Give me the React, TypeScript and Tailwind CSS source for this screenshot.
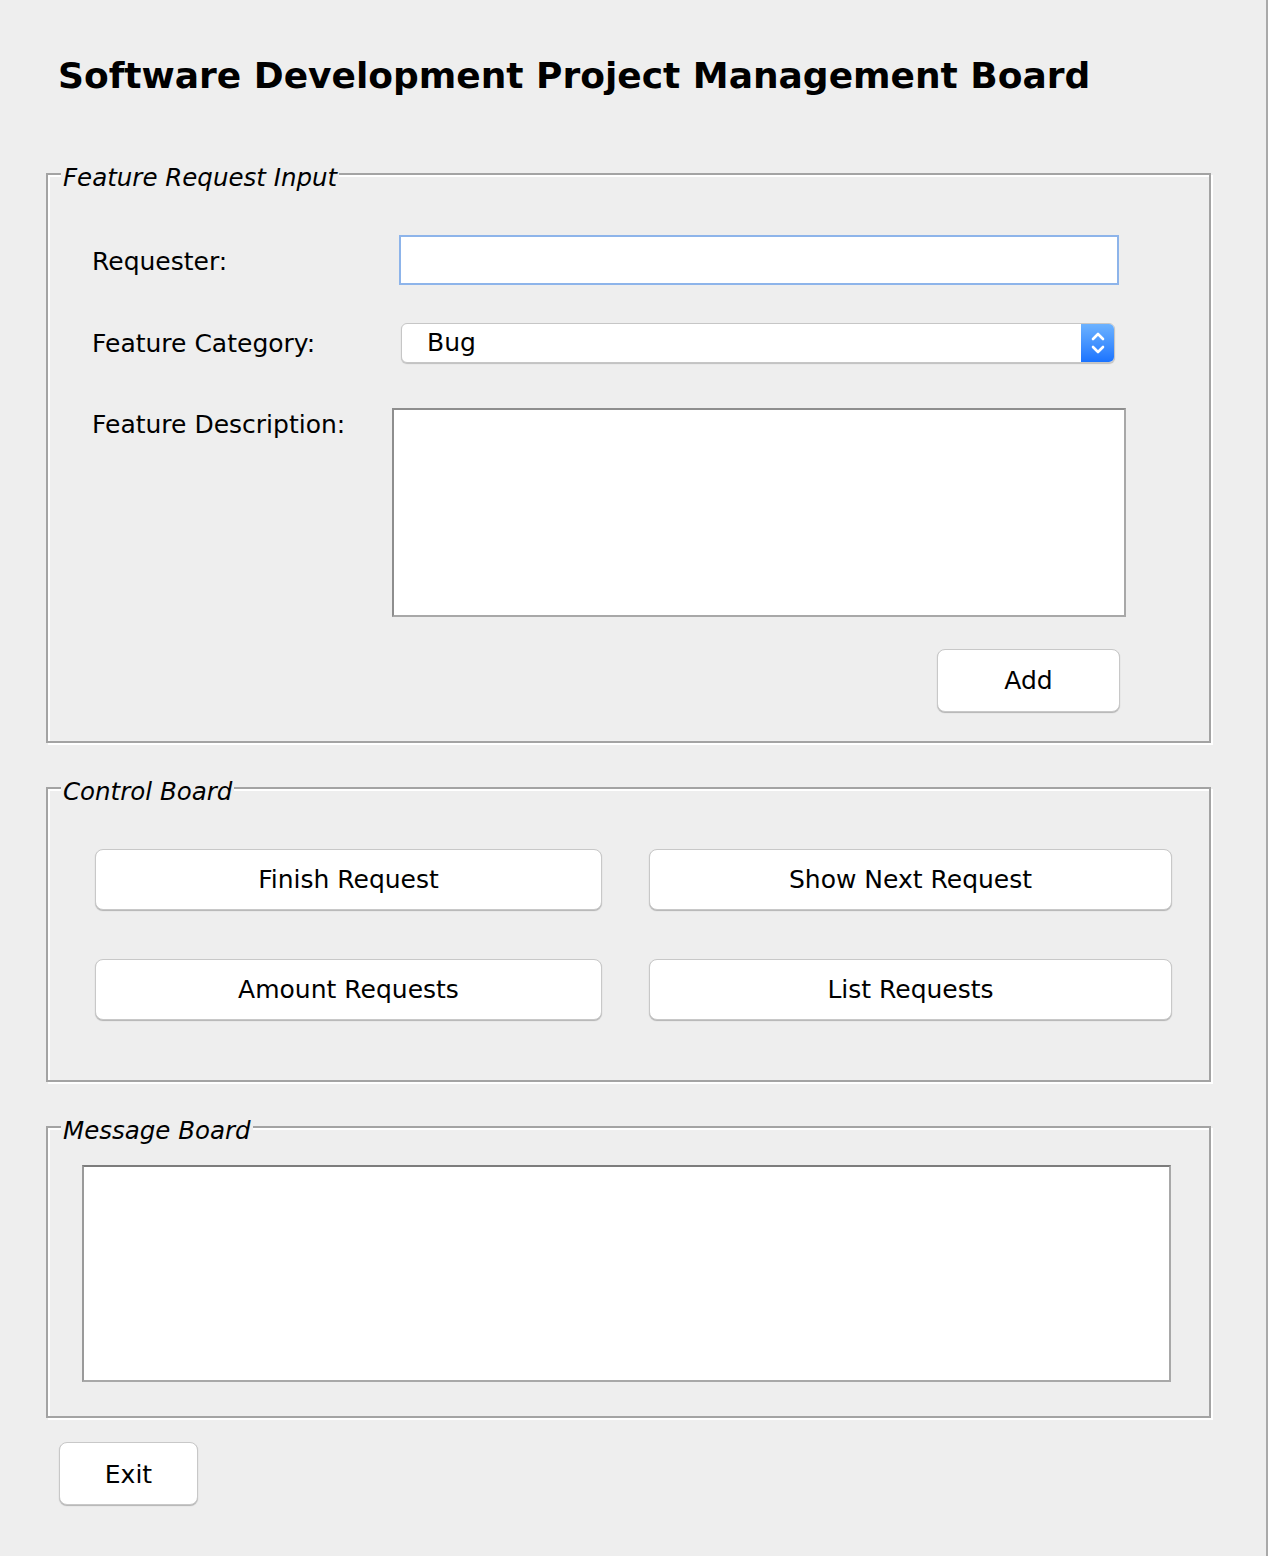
import React from 'react'

const font = { fontFamily: '"DejaVu Sans", "Liberation Sans", sans-serif' }

function Panel({ title, className, children }: { title: string; className?: string; children: React.ReactNode }) {
  return (
    <div
      className={`relative w-[1165px] border-2 border-[#a3a3a3] shadow-[2px_2px_0_#fff,inset_2px_2px_0_#fff] ${className ?? ''}`}
    >
      <span className="absolute left-[13px] top-[-12px] bg-[#eeeeee] pl-[2px] pr-[2px] text-[24.5px] italic leading-[30px] text-black">
        {title}
      </span>
      {children}
    </div>
  )
}

function MacButton({ label, className }: { label: string; className?: string }) {
  return (
    <button
      className={`flex items-center justify-center rounded-[8px] border border-[#c8c8c8] bg-white text-[25px] text-black shadow-[0_1px_1px_rgba(0,0,0,0.25)] ${className ?? ''}`}
    >
      {label}
    </button>
  )
}

export default function App() {
  return (
    <div className="h-[1556px] w-[1268px] border-r-2 border-[#a9a9a9] bg-[#eeeeee] pl-[46px]" style={font}>
      {/* Title */}
      <h1 className="pl-[12px] pt-[51px] text-[36px] font-bold leading-[50px] text-black">
        Software Development Project Management Board
      </h1>

      {/* Feature Request Input */}
      <Panel title="Feature Request Input" className="mt-[72px] h-[570px]">
        <div className="mt-[60px] flex h-[50px] items-center">
          <label className="w-[351px] pl-[44px] pt-[3px] text-[25px] text-black">Requester:</label>
          <input className="h-[50px] w-[720px] border-2 border-[#8db4ea] bg-white outline-none" />
        </div>

        <div className="mt-[38px] flex h-[40px] items-center">
          <label className="w-[353px] pl-[44px] pt-[1px] text-[25px] text-black">Feature Category:</label>
          <div className="flex h-[40px] w-[714px] items-stretch overflow-hidden rounded-[6px] border border-[#c6c6c6] bg-white shadow-[0_1px_1px_rgba(0,0,0,0.2)]">
            <span className="flex-1 pl-[25px] text-[25px] leading-[38px] text-black">Bug</span>
            <span className="flex w-[33px] items-center justify-center bg-gradient-to-b from-[#6cb2ff] to-[#1a73ff]">
              <svg width="16" height="28" viewBox="0 0 16 28" fill="none" stroke="#fff" strokeWidth="2.6" strokeLinecap="round" strokeLinejoin="round">
                <path d="M3 10 L8 5 L13 10" />
                <path d="M3 18 L8 23 L13 18" />
              </svg>
            </span>
          </div>
        </div>

        <div className="mt-[45px] flex">
          <label className="w-[344px] pl-[44px] pt-[2px] text-[25px] leading-[30px] text-black">Feature Description:</label>
          <textarea className="h-[209px] w-[734px] resize-none border-2 border-[#8e8e8e] border-r-[#a8a8a8] border-b-[#a8a8a8] bg-white outline-none" />
        </div>

        <div className="mt-[32px] flex">
          <MacButton label="Add" className="ml-[889px] h-[63px] w-[183px]" />
        </div>
      </Panel>

      {/* Control Board */}
      <Panel title="Control Board" className="mt-[44px] h-[295px]">
        <div className="grid grid-cols-[507px_523px] gap-x-[47px] gap-y-[49px] pl-[47px] pt-[60px]">
          <MacButton label="Finish Request" className="h-[61px]" />
          <MacButton label="Show Next Request" className="h-[61px]" />
          <MacButton label="Amount Requests" className="h-[61px]" />
          <MacButton label="List Requests" className="h-[61px]" />
        </div>
      </Panel>

      {/* Message Board */}
      <Panel title="Message Board" className="mt-[44px] h-[292px]">
        <div className="pl-[34px] pt-[37px]">
          <textarea className="h-[217px] w-[1089px] resize-none border-2 border-[#7c7c7c] border-l-[#9a9a9a] border-r-[#a8a8a8] border-b-[#a8a8a8] bg-white outline-none" />
        </div>
      </Panel>

      <MacButton label="Exit" className="ml-[13px] mt-[24px] h-[63px] w-[139px] pt-[3px]" />
    </div>
  )
}
